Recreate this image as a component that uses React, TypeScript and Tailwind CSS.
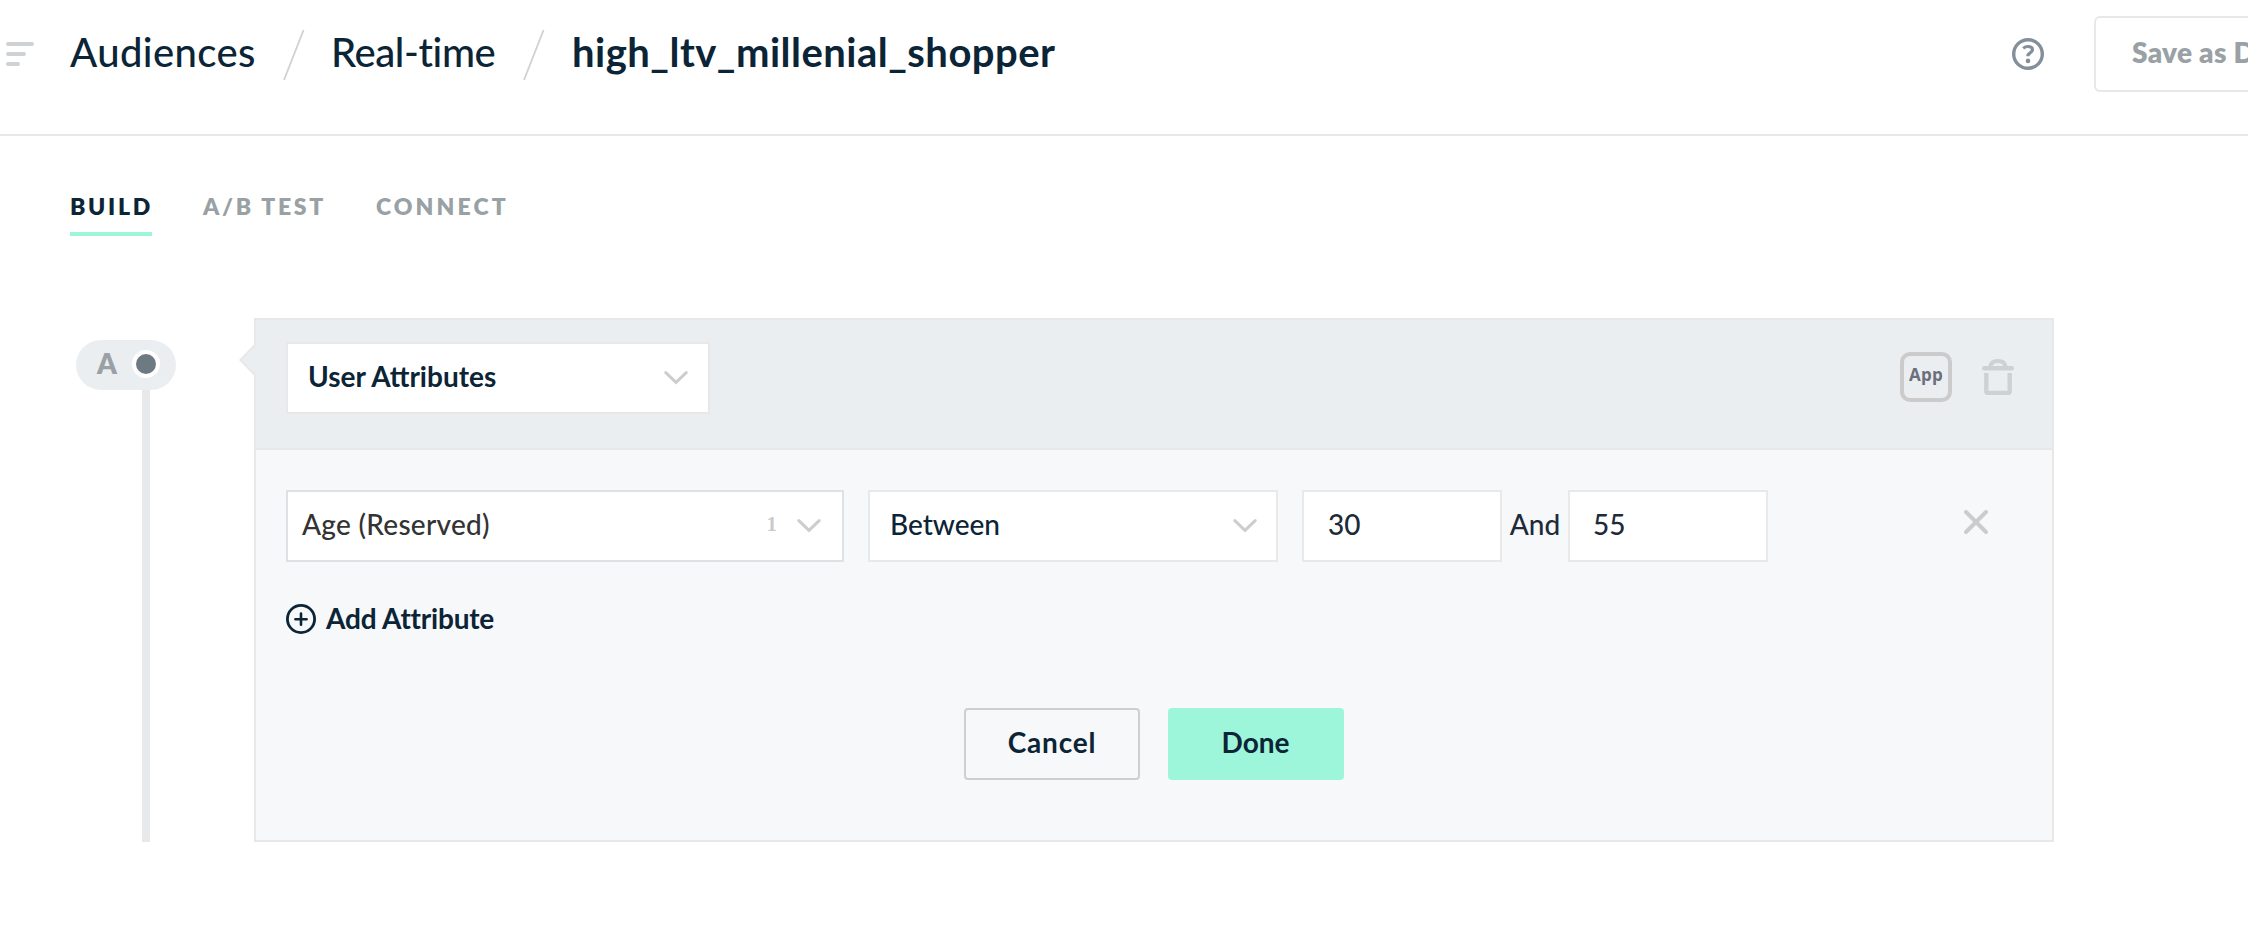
import React from "react";

function Slash() {
  return (
    <svg width="22" height="50" viewBox="0 0 22 50" className="shrink-0" fill="none">
      <path d="M20.6 0L1 50" stroke="#ced2d5" strokeWidth="1.8" />
    </svg>
  );
}

function Chevron() {
  return (
    <svg width="24" height="14" viewBox="0 0 24 14" fill="none" className="shrink-0">
      <path d="M1.8 1.6L12 11.4L22.2 1.6" stroke="#cdcdcd" strokeWidth="3" strokeLinecap="round" />
    </svg>
  );
}

function MenuIcon() {
  return (
    <div className="flex w-[28px] flex-col gap-[6px]">
      <span className="h-1 w-[28px] rounded-full bg-[#ced2d5]" />
      <span className="h-1 w-[20px] rounded-full bg-[#ced2d5]" />
      <span className="h-1 w-[14px] rounded-full bg-[#ced2d5]" />
    </div>
  );
}

function HelpIcon() {
  return (
    <svg width="32" height="32" viewBox="0 0 32 32" fill="none" className="shrink-0">
      <circle cx="16" cy="16" r="14.3" stroke="#83909b" strokeWidth="3.4" />
      <path
        d="M11.2 10.3C12.6 9 14.2 8.5 16 8.5C18.6 8.5 20.5 9.6 20.5 11.8C20.5 14.7 15.8 14.6 15.8 18.2"
        stroke="#83909b"
        strokeWidth="3.2"
      />
      <circle cx="16" cy="22.9" r="2.3" fill="#83909b" />
    </svg>
  );
}

function TrashIcon() {
  return (
    <svg width="32" height="36" viewBox="0 0 32 36" fill="none" className="shrink-0">
      <rect x="0" y="7" width="32" height="4.6" rx="2.3" fill="#cdd1d4" />
      <path d="M8.6 8C8.6 3.6 11.5 2 16 2C20.5 2 23.2 3.6 23.2 8" stroke="#cdd1d4" strokeWidth="4" />
      <path d="M4.3 14V32.2Q4.3 34 6.1 34H25.9Q27.7 34 27.7 32.2V14" stroke="#cdd1d4" strokeWidth="4.4" />
    </svg>
  );
}

function CloseIcon() {
  return (
    <svg width="24" height="24" viewBox="0 0 24 24" fill="none" className="shrink-0">
      <path d="M2 2L22 22M22 2L2 22" stroke="#cccccc" strokeWidth="4" strokeLinecap="round" />
    </svg>
  );
}

function PlusCircle() {
  return (
    <svg width="30" height="30" viewBox="0 0 30 30" fill="none" className="shrink-0">
      <circle cx="15" cy="15" r="13.6" stroke="#0b2436" strokeWidth="2.8" />
      <path d="M15 9.6V20.8M9.4 15.2H20.6" stroke="#0b2436" strokeWidth="2.6" strokeLinecap="round" />
    </svg>
  );
}

function Header() {
  return (
    <header className="flex h-[136px] w-full items-start overflow-hidden border-b-2 border-[#e8e8e8] pl-[6px] whitespace-nowrap">
      <div className="flex h-[108px] items-center">
        <MenuIcon />
        <nav className="ml-[36px] flex h-full items-center text-[40px] leading-[50px] font-medium">
          <span className="mt-[-5px] w-[213px] shrink-0 tracking-[0.4px]">Audiences</span>
          <div className="mt-[2px] flex"><Slash /></div>
          <span className="mt-[-5px] ml-[26px] w-[192px] shrink-0 tracking-[-0.4px]">Real-time</span>
          <div className="mt-[2px] flex"><Slash /></div>
          <span className="mt-[-5px] ml-[27px] font-bold tracking-[0.48px]">high_ltv_millenial_shopper</span>
        </nav>
      </div>
      <div className="ml-auto flex h-[108px] shrink-0 items-center">
        <HelpIcon />
        <button className="ml-[50px] h-[76px] w-[154px] shrink-0 rounded-l-[6px] border-2 border-r-0 border-[#e8e8e8] pb-[4px] pl-[36px] text-left text-[28px] leading-[48px] font-extrabold tracking-[0.3px] text-[#99a1a5]">
          Save as Draft
        </button>
      </div>
    </header>
  );
}

function Tabs() {
  return (
    <div className="flex h-[44px] items-start pl-[70px] text-[23px] leading-[20px] font-extrabold whitespace-nowrap text-[#99a1a5]">
      <span className="h-[40px] w-[82px] shrink-0 border-b-4 border-[#9df5da] tracking-[2.7px] text-[#0b2436]">BUILD</span>
      <span className="ml-[51px] w-[173px] tracking-[2.7px]">A/B TEST</span>
      <span className="tracking-[3.1px]">CONNECT</span>
    </div>
  );
}

function Timeline() {
  return (
    <div className="flex w-[184px] shrink-0 flex-col pt-[22px] pl-[6px]">
      <div className="flex h-[50px] w-[100px] items-center rounded-full bg-[#ebeef1] pl-[21px]">
        <span className="mt-[-4px] w-[35px] text-[28px] leading-[28px] font-extrabold text-[#9aa0a3]">A</span>
        <span className="mt-[-2px] h-7 w-7 rounded-full border-4 border-white bg-[#6e7a82]" />
      </div>
      <div className="ml-[66px] w-2 flex-1 bg-[#e8e9eb]" />
    </div>
  );
}

function Panel() {
  return (
    <section className="relative flex h-[524px] w-[1800px] flex-col border-2 border-[#e8e8e8] bg-[#f7f8fa]">
      <svg width="19" height="32" viewBox="0 0 19 32" fill="none" className="absolute top-[24px] left-[-18px]">
        <path d="M19 0L17 1L2.4 16L17 31L19 32Z" fill="#eaeef1" />
        <path d="M17 1L2.4 16L17 31" stroke="#e8e8e8" strokeWidth="2" />
      </svg>
      <div className="flex h-[130px] shrink-0 items-start border-b-2 border-[#e8e8e8] bg-[#eaeef1] pt-[22px] pr-[38px] pl-[30px]">
        <div className="flex h-[72px] w-[424px] items-center justify-between border-2 border-[#e8e8e8] bg-white pr-[20px] pl-[20px] text-[28px] font-bold">
          <span className="pb-[4px] leading-[40px]">User Attributes</span>
          <Chevron />
        </div>
        <div className="mt-[10px] ml-auto flex items-center">
          <div className="flex h-[50px] w-[52px] items-center justify-center rounded-[10px] border-4 border-[#cbcbcb] pb-[4px] font-['Open_Sans',sans-serif] text-[17px] leading-[20px] font-bold tracking-[0.3px] text-[#6b6f7b]">
            App
          </div>
          <div className="ml-[30px] flex"><TrashIcon /></div>
        </div>
      </div>

      <div className="flex flex-1 flex-col pt-[40px] pl-[30px] text-[28px] leading-[40px] font-medium">
        <div className="flex h-[72px] items-center">
          <div className="flex h-[72px] w-[558px] items-center border-2 border-[#dfe1e4] bg-white pr-[21px] pl-[14px]">
            <span className="pb-[4px] tracking-[0.28px] text-[#333333]">Age (Reserved)</span>
            <span className="mt-[-4px] mr-[20px] ml-auto font-['Liberation_Serif',serif] text-[21px] leading-[24px] font-bold text-[#c9cbcd]">1</span>
            <Chevron />
          </div>
          <div className="ml-6 flex h-[72px] w-[410px] items-center justify-between border-2 border-[#e8e9ea] bg-white pr-[19px] pl-[20px]">
            <span className="pb-[4px]">Between</span>
            <Chevron />
          </div>
          <div className="ml-6 flex h-[72px] w-[200px] items-center border-2 border-[#e8e9ea] bg-white pb-[4px] pl-[24px] text-[#1d2a3a]">30</div>
          <span className="w-[66px] pb-[4px] text-center text-[#1d2a3a]">And</span>
          <div className="flex h-[72px] w-[200px] items-center border-2 border-[#e8e9ea] bg-white pb-[4px] pl-[23px] text-[#1d2a3a]">55</div>
          <div className="mt-[-8px] ml-[196px] flex"><CloseIcon /></div>
        </div>
        <div className="mt-[37px] flex items-center font-bold">
          <PlusCircle />
          <span className="mb-[2px] ml-[10px] leading-[38px] tracking-[-0.2px]">Add Attribute</span>
        </div>
        <div className="mt-[69px] ml-[678px] flex gap-7 font-bold">
          <button className="h-[72px] w-[176px] rounded-[4px] border-2 border-[#cdcfd1] pb-[4px] tracking-[0.8px]">Cancel</button>
          <button className="h-[72px] w-[176px] rounded-[4px] bg-[#9df5da] pr-[1px] pb-[4px]">Done</button>
        </div>
      </div>
    </section>
  );
}

export default function App() {
  return (
    <div className="h-[926px] w-[2248px] overflow-hidden bg-white font-['Lato',sans-serif] text-[#0b2436]">
      <Header />
      <main className="pt-[60px]">
        <Tabs />
        <div className="mt-[78px] flex pl-[70px]">
          <Timeline />
          <Panel />
        </div>
      </main>
    </div>
  );
}
